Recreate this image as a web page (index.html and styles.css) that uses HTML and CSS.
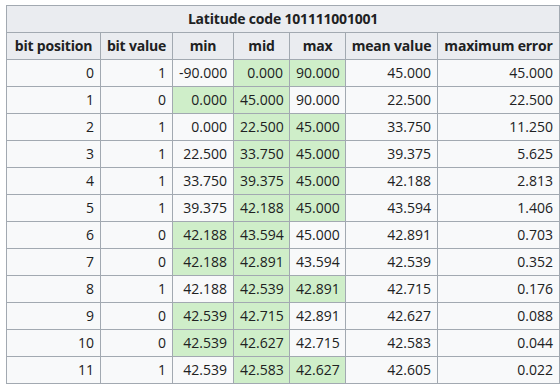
FILE: index.html
```html
<!DOCTYPE html>
<html lang="en">
<head>
    <meta charset="UTF-8">
    <title>Latitude code</title>
    <link rel="stylesheet" href="styles.css">
</head>
<body>
    <table class="wikitable">
        <colgroup>
            <col class="c-pos">
            <col class="c-bit">
            <col class="c-min">
            <col class="c-mid">
            <col class="c-max">
            <col class="c-mean">
            <col class="c-err">
        </colgroup>
        <thead>
            <tr>
                <th colspan="7">Latitude code 101111001001</th>
            </tr>
            <tr>
                <th>bit position</th>
                <th>bit value</th>
                <th>min</th>
                <th>mid</th>
                <th>max</th>
                <th>mean value</th>
                <th>maximum error</th>
            </tr>
        </thead>
        <tbody>
            <tr><td>0</td><td>1</td><td>-90.000</td><td class="hit">0.000</td><td class="hit">90.000</td><td>45.000</td><td>45.000</td></tr>
            <tr><td>1</td><td>0</td><td class="hit">0.000</td><td class="hit">45.000</td><td>90.000</td><td>22.500</td><td>22.500</td></tr>
            <tr><td>2</td><td>1</td><td>0.000</td><td class="hit">22.500</td><td class="hit">45.000</td><td>33.750</td><td>11.250</td></tr>
            <tr><td>3</td><td>1</td><td>22.500</td><td class="hit">33.750</td><td class="hit">45.000</td><td>39.375</td><td>5.625</td></tr>
            <tr><td>4</td><td>1</td><td>33.750</td><td class="hit">39.375</td><td class="hit">45.000</td><td>42.188</td><td>2.813</td></tr>
            <tr><td>5</td><td>1</td><td>39.375</td><td class="hit">42.188</td><td class="hit">45.000</td><td>43.594</td><td>1.406</td></tr>
            <tr><td>6</td><td>0</td><td class="hit">42.188</td><td class="hit">43.594</td><td>45.000</td><td>42.891</td><td>0.703</td></tr>
            <tr><td>7</td><td>0</td><td class="hit">42.188</td><td class="hit">42.891</td><td>43.594</td><td>42.539</td><td>0.352</td></tr>
            <tr><td>8</td><td>1</td><td>42.188</td><td class="hit">42.539</td><td class="hit">42.891</td><td>42.715</td><td>0.176</td></tr>
            <tr><td>9</td><td>0</td><td class="hit">42.539</td><td class="hit">42.715</td><td>42.891</td><td>42.627</td><td>0.088</td></tr>
            <tr><td>10</td><td>0</td><td class="hit">42.539</td><td class="hit">42.627</td><td>42.715</td><td>42.583</td><td>0.044</td></tr>
            <tr><td>11</td><td>1</td><td>42.539</td><td class="hit">42.583</td><td class="hit">42.627</td><td>42.605</td><td>0.022</td></tr>
        </tbody>
    </table>
</body>
</html>
```

FILE: styles.css
```css
body {
    margin: 0;
    padding: 5px 6px;
    background-color: #fff;
    font-family: 'Open Sans', 'Noto Sans', sans-serif;
    font-size: 14px;
    color: #202122;
}

.wikitable {
    border-collapse: collapse;
    table-layout: fixed;
    width: 554px;
    background-color: #f8f9fa;
    border: 1px solid #a2a9b1;
}

.wikitable th,
.wikitable td {
    border: 1px solid #a2a9b1;
    padding: 3px 6px;
    line-height: 20px;
    white-space: nowrap;
    overflow: hidden;
}

.wikitable th {
    background-color: #eaecf0;
    font-weight: bold;
    text-align: center;
    padding: 3px 2px;
    letter-spacing: -0.2px;
}

.wikitable td {
    text-align: right;
}

.wikitable td.hit {
    background-color: #cfeec9;
}

.c-pos { width: 94px; }
.c-bit { width: 72px; }
.c-min { width: 61px; }
.c-mid { width: 56px; }
.c-max { width: 56px; }
.c-mean { width: 92px; }
.c-err { width: 122px; }
```
